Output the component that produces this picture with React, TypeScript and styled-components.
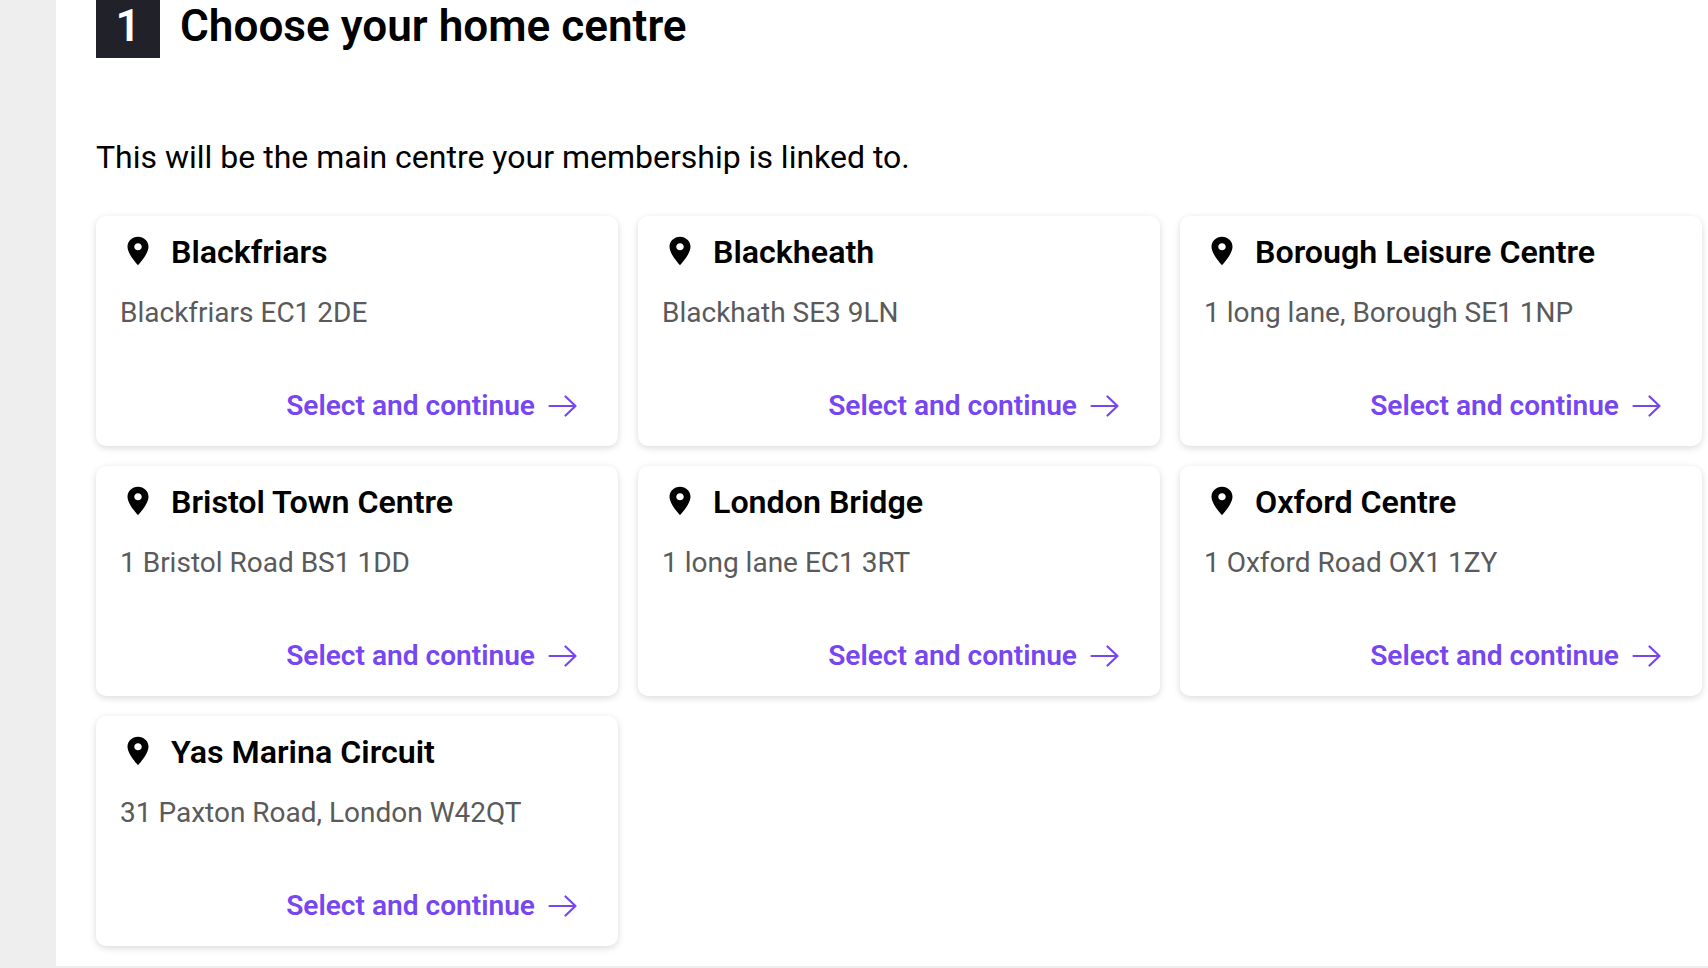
import React from 'react';
import styled, { createGlobalStyle } from 'styled-components';

const GlobalStyle = createGlobalStyle`
  html, body {
    margin: 0;
    padding: 0;
    height: 968px;
    overflow: hidden;
    background-color: #eeeeee;
    font-family: Roboto, "Liberation Sans", sans-serif;
  }
`;

const Page = styled.div`
  padding: 0 0 2px 56px;
  height: 968px;
  box-sizing: border-box;
`;

const Main = styled.main`
  background-color: #ffffff;
  height: 100%;
  box-sizing: border-box;
  padding: 0 6px 0 40px;
`;

const Heading = styled.div`
  display: flex;
  align-items: flex-start;
  gap: 20px;
`;

const StepBadge = styled.div`
  width: 64px;
  height: 58px;
  background-color: #212229;
  color: #ffffff;
  font-size: 44px;
  font-weight: 600;
  line-height: 52px;
  text-align: center;
`;

const Title = styled.h1`
  margin: 0;
  color: #000000;
  font-size: 44.1px;
  font-weight: 600;
  line-height: 52px;
`;

const Intro = styled.p`
  margin: 75px 0 35px;
  color: #000000;
  font-size: 32px;
  font-weight: 400;
  line-height: 48px;
`;

const CentreGrid = styled.div`
  display: grid;
  grid-template-columns: repeat(3, 522px);
  grid-auto-rows: 230px;
  gap: 20px;
`;

const Card = styled.article`
  display: flex;
  flex-direction: column;
  box-sizing: border-box;
  padding: 17px 24px 0;
  border-radius: 10px;
  background-color: #ffffff;
  box-shadow: 0 2px 7px rgba(0, 0, 0, 0.15);
`;

const CardHeader = styled.div`
  display: flex;
  align-items: center;
  gap: 15px;
  height: 36px;
`;

const PinIcon = styled.svg`
  width: 36px;
  height: 34px;
  flex: none;
  fill: #000000;
`;

const CardName = styled.h2`
  margin: 1px 0 0;
  color: #000000;
  font-size: 32.2px;
  font-weight: 600;
  line-height: 36px;
`;

const Address = styled.p`
  margin: 24px 0 0;
  color: #5a5a5a;
  font-size: 28px;
  line-height: 40px;
`;

const SelectLink = styled.a`
  display: flex;
  align-items: center;
  justify-content: flex-end;
  gap: 13px;
  margin-top: auto;
  margin-bottom: 22px;
  padding-right: 17px;
  color: #7646f0;
  font-size: 28.1px;
  font-weight: 600;
  line-height: 36px;
  cursor: pointer;
`;

const ArrowIcon = styled.svg`
  width: 29px;
  height: 22px;
  flex: none;
  fill: none;
  stroke: #7646f0;
  stroke-width: 2.2;
  stroke-linecap: round;
  stroke-linejoin: round;
`;

const centres = [
  { name: 'Blackfriars', address: 'Blackfriars EC1 2DE' },
  { name: 'Blackheath', address: 'Blackhath SE3 9LN' },
  { name: 'Borough Leisure Centre', address: '1 long lane, Borough SE1 1NP' },
  { name: 'Bristol Town Centre', address: '1 Bristol Road BS1 1DD' },
  { name: 'London Bridge', address: '1 long lane EC1 3RT' },
  { name: 'Oxford Centre', address: '1 Oxford Road OX1 1ZY' },
  { name: 'Yas Marina Circuit', address: '31 Paxton Road, London W42QT' },
];

const App: React.FC = () => {
  return (
    <Page>
      <GlobalStyle />
      <Main>
        <Heading>
          <StepBadge>1</StepBadge>
          <Title>Choose your home centre</Title>
        </Heading>
        <Intro>This will be the main centre your membership is linked to.</Intro>
        <CentreGrid>
          {centres.map((centre) => (
            <Card key={centre.name}>
              <CardHeader>
                <PinIcon viewBox="0 0 24 24" preserveAspectRatio="none">
                  <path d="M12 2C8.13 2 5 5.13 5 9c0 5.25 7 13 7 13s7-7.75 7-13c0-3.87-3.13-7-7-7zm0 9.5c-1.38 0-2.5-1.12-2.5-2.5s1.12-2.5 2.5-2.5 2.5 1.12 2.5 2.5-1.12 2.5-2.5 2.5z" />
                </PinIcon>
                <CardName>{centre.name}</CardName>
              </CardHeader>
              <Address>{centre.address}</Address>
              <SelectLink>
                Select and continue
                <ArrowIcon viewBox="0 0 29 22">
                  <path d="M1.5 11H27.5M17.5 1.5L27.5 11L17.5 20.5" />
                </ArrowIcon>
              </SelectLink>
            </Card>
          ))}
        </CentreGrid>
      </Main>
    </Page>
  );
};

export default App;
